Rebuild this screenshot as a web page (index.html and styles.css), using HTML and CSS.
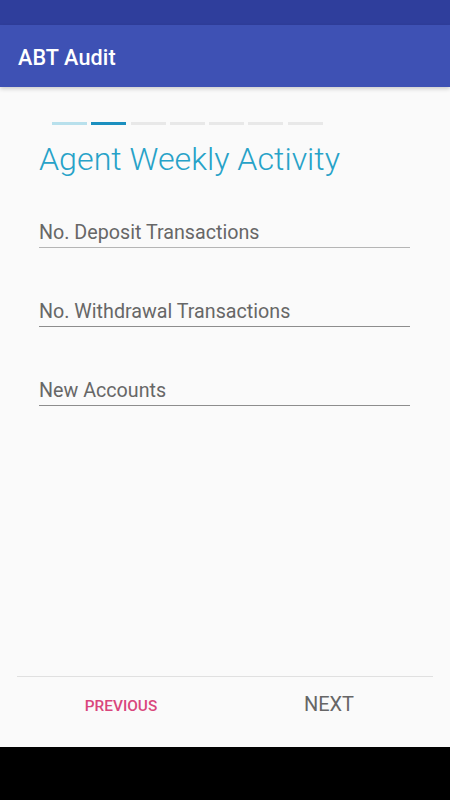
FILE: index.html
```html
<!DOCTYPE html>
<html>
<head>
<meta charset="utf-8">
<link rel="stylesheet" href="styles.css">
</head>
<body>
<div class="screen">
  <div class="status"></div>
  <header class="appbar"><span class="app-title">ABT Audit</span></header>
  <main class="content">
    <div class="stepper">
      <span class="seg seg-done"></span>
      <span class="seg seg-active"></span>
      <span class="seg"></span>
      <span class="seg"></span>
      <span class="seg"></span>
      <span class="seg"></span>
      <span class="seg"></span>
    </div>
    <h1 class="title">Agent Weekly Activity</h1>
    <div class="field field-first"><span class="label">No. Deposit Transactions</span></div>
    <div class="field"><span class="label">No. Withdrawal Transactions</span></div>
    <div class="field"><span class="label">New Accounts</span></div>
  </main>
  <footer class="footer">
    <button class="btn btn-prev">PREVIOUS</button>
    <button class="btn btn-next">NEXT</button>
  </footer>
  <div class="navbar"></div>
</div>
</body>
</html>
```

FILE: styles.css
```css
html, body {
  margin: 0;
  padding: 0;
  background: #fafafa;
}
.screen {
  width: 450px;
  height: 800px;
  display: flex;
  flex-direction: column;
  font-family: Roboto, "Noto Sans", sans-serif;
  background: #fafafa;
  overflow: hidden;
}
.status {
  height: 25px;
  background: #2f3e9c;
  flex: none;
}
.appbar {
  height: 62px;
  background: #3e51b4;
  flex: none;
  display: flex;
  align-items: center;
  padding-left: 18px;
  padding-top: 2px;
  box-sizing: border-box;
  box-shadow: 0 2px 4px rgba(0,0,0,0.18);
  position: relative;
  z-index: 1;
}
.app-title {
  color: #fff;
  font-size: 21.6px;
  font-weight: 500;
  letter-spacing: 0.1px;
}
.content {
  flex: 1;
  padding: 35px 40px 0 39px;
}
.stepper {
  display: flex;
  gap: 4.3px;
  margin-left: 13px;
}
.seg {
  width: 35px;
  height: 3px;
  background: #e8e8e8;
}
.seg-done { background: #b8e0ec; }
.seg-active { background: #1b8fbf; }
.title {
  margin: 14px 0 0 0;
  font-size: 32.2px;
  font-weight: 300;
  color: #27a2c8;
  line-height: 40px;
}
.field {
  border-bottom: 1px solid #8d8d8d;
  height: 36px;
  margin-top: 42px;
  display: flex;
  align-items: flex-end;
}
.field-first {
  margin-top: 32px;
  border-bottom-color: #b5b5b5;
}
.label {
  font-size: 19.7px;
  color: #676767;
  line-height: 28px;
  padding-bottom: 0;
}
.footer {
  flex: none;
  height: 70px;
  margin: 0 17px;
  border-top: 1px solid #e0e0e0;
  display: grid;
  grid-template-columns: 1fr 1fr;
}
.btn {
  background: none;
  border: none;
  font-family: Roboto, "Noto Sans", sans-serif;
  padding: 0;
  display: flex;
  align-items: center;
  justify-content: center;
}
.btn-prev {
  color: #d9467c;
  font-size: 15.4px;
  font-weight: 500;
  padding-bottom: 12px;
}
.btn-next {
  color: #666;
  font-size: 20px;
  font-weight: 400;
  padding-bottom: 16px;
}
.navbar {
  height: 53px;
  background: #000;
  flex: none;
}
```
